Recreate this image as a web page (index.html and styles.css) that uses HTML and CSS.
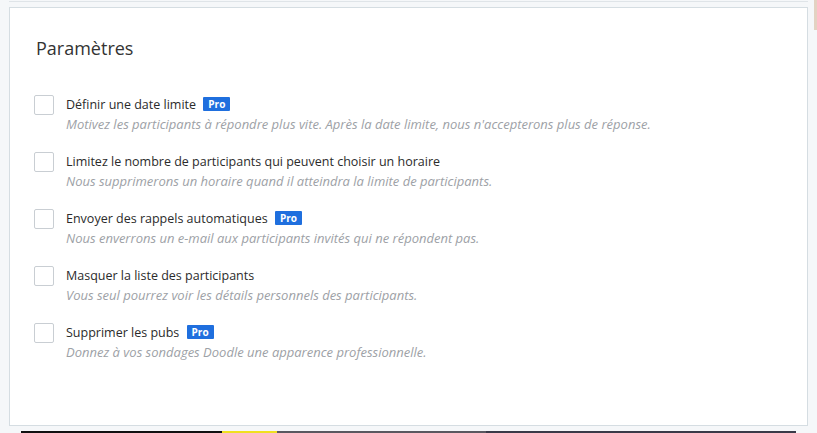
FILE: index.html
```html
<!DOCTYPE html>
<html lang="fr">
<head>
<meta charset="utf-8">
<link rel="stylesheet" href="styles.css">
</head>
<body>
<div class="page">
  <div class="prev"></div>
  <section class="card">
    <h2 class="title">Paramètres</h2>
    <ul class="options">
      <li class="option">
        <span class="box"></span>
        <div class="text">
          <div class="label">Définir une date limite <span class="pro">Pro</span></div>
          <div class="desc">Motivez les participants à répondre plus vite. Après la date limite, nous n'accepterons plus de réponse.</div>
        </div>
      </li>
      <li class="option">
        <span class="box"></span>
        <div class="text">
          <div class="label">Limitez le nombre de participants qui peuvent choisir un horaire</div>
          <div class="desc">Nous supprimerons un horaire quand il atteindra la limite de participants.</div>
        </div>
      </li>
      <li class="option">
        <span class="box"></span>
        <div class="text">
          <div class="label">Envoyer des rappels automatiques <span class="pro">Pro</span></div>
          <div class="desc">Nous enverrons un e-mail aux participants invités qui ne répondent pas.</div>
        </div>
      </li>
      <li class="option">
        <span class="box"></span>
        <div class="text">
          <div class="label">Masquer la liste des participants</div>
          <div class="desc">Vous seul pourrez voir les détails personnels des participants.</div>
        </div>
      </li>
      <li class="option">
        <span class="box"></span>
        <div class="text">
          <div class="label">Supprimer les pubs <span class="pro">Pro</span></div>
          <div class="desc">Donnez à vos sondages Doodle une apparence professionnelle.</div>
        </div>
      </li>
    </ul>
  </section>
  <div class="strip"></div>
</div>
<div class="edge"></div>
</body>
</html>
```
FILE: styles.css
```css
html, body {
  margin: 0;
  padding: 0;
  background: #f5f7f9;
  overflow: hidden;
}
body {
  width: 817px;
  height: 433px;
  font-family: "Open Sans", "Noto Sans", sans-serif;
  color: #333;
}
.page {
  padding: 0 9px;
  width: 799px;
}
.prev {
  height: 1px;
  border-bottom: 1px solid #dfe4e8;
  margin-bottom: 5px;
}
.card {
  background: #fff;
  border: 1px solid #d5dde2;
  height: 419px;
  box-sizing: border-box;
  padding: 27px 0 0 24px;
}
.title {
  margin: 0;
  padding-left: 2px;
  font-size: 18px;
  font-weight: 400;
  line-height: 26px;
  color: #333;
}
.options {
  list-style: none;
  margin: 35px 0 0;
  padding: 0;
  display: flex;
  flex-direction: column;
  gap: 15px;
}
.option {
  display: flex;
  gap: 12px;
  height: 42px;
}
.box {
  width: 18px;
  height: 18px;
  border: 1px solid #c9ced3;
  border-radius: 2px;
  flex: none;
  margin-top: -1px;
}
.label {
  font-size: 12.5px;
  line-height: 18px;
  color: #2b2b2b;
}
.pro {
  display: inline-block;
  background: #1f6fde;
  color: #fff;
  font-size: 10px;
  font-weight: 700;
  line-height: 14px;
  padding: 0 5px;
  border-radius: 1px;
  margin-left: 4px;
  vertical-align: 1px;
}
.desc {
  font-size: 13px;
  line-height: 20px;
  font-style: italic;
  color: #9da1a6;
}
.strip {
  margin: 5px 12px 0;
  height: 3px;
  background: linear-gradient(90deg, #111 0 26%, #f0e020 26% 33%, #5a5860 33% 60%, #3a3a48 60% 100%);
}
.edge {
  position: absolute;
  top: 0;
  right: 0;
  width: 3px;
  height: 30px;
  background: #e3d2c2;
}
```
